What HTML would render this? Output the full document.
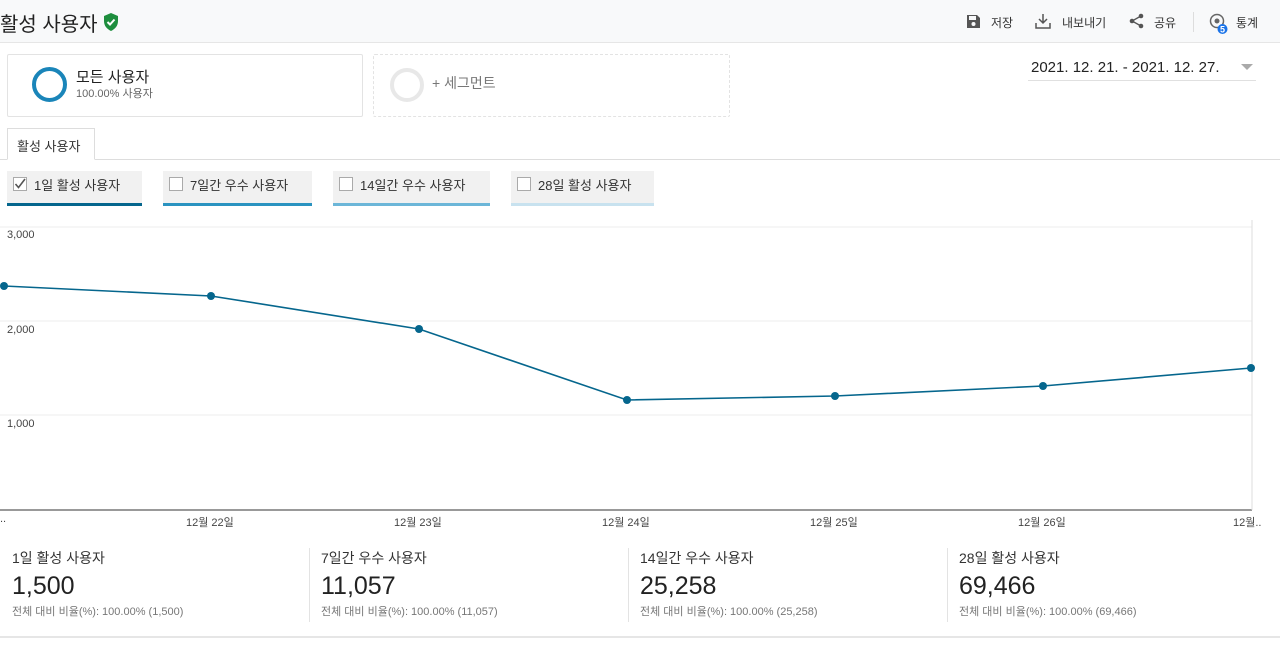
<!DOCTYPE html>
<html><head><meta charset="utf-8"><style>
*{margin:0;padding:0;box-sizing:border-box}
body{width:1280px;height:649px;background:#fff;font-family:"Liberation Sans","Noto Sans CJK KR",sans-serif;color:#222;position:relative;overflow:hidden}
.a{position:absolute}
.hdr{left:0;top:0;width:1280px;height:43px;background:#f8f9fa;border-bottom:1px solid #e6e6e6}
.tb{font-size:12px;color:#333}
.card{border:1px solid #e3e3e3;border-radius:2px;background:#fff}
.chk{height:32px;background:#f1f1f1;font-size:13px;color:#333;padding:4px 0 0 27px}
.chk .bx{position:absolute;left:6px;top:6px;width:14px;height:14px;border:1px solid #aaa;background:#fff}
.ul{position:absolute;left:0;bottom:-3px;height:3px;width:100%}
.lab{font-size:11px;color:#444}
.mt{font-size:14px;color:#333}
.mv{font-size:25px;color:#222}
.ms{font-size:11px;color:#777}
</style></head><body>
<div class="a hdr"></div>
<div class="a" style="left:0;top:8px;font-size:20px;color:#222">활성 사용자</div>
<svg class="a" style="left:103px;top:13px" width="16" height="18" viewBox="0 0 16 18"><path d="M8 0L15 3V8C15 13 12 16 8 18C4 16 1 13 1 8V3Z" fill="#1e8e3e"/><path d="M4.5 9L7 11.5L11.5 6.5" stroke="#fff" stroke-width="2" fill="none"/></svg>
<svg class="a" style="left:966px;top:14px" width="15" height="15" viewBox="0 0 15 15"><path d="M1 1H11L14 4V14H1Z" fill="#555"/><rect x="3" y="2" width="7" height="4" fill="#f8f9fa"/><circle cx="7.5" cy="10" r="2" fill="#f8f9fa"/></svg>
<div class="a tb" style="left:991px;top:14px">저장</div>
<svg class="a" style="left:1035px;top:13px" width="16" height="16" viewBox="0 0 16 16" fill="none" stroke="#555" stroke-width="1.5"><path d="M8 1V10M4 6L8 10L12 6M1 10V15H15V10"/></svg>
<div class="a tb" style="left:1062px;top:14px">내보내기</div>
<svg class="a" style="left:1129px;top:13px" width="15" height="16" viewBox="0 0 15 16"><circle cx="12" cy="3" r="2.3" fill="#555"/><circle cx="3" cy="8" r="2.3" fill="#555"/><circle cx="12" cy="13" r="2.3" fill="#555"/><path d="M12 3L3 8L12 13" stroke="#555" stroke-width="1.3" fill="none"/></svg>
<div class="a tb" style="left:1154px;top:14px">공유</div>
<div class="a" style="left:1193px;top:12px;width:1px;height:20px;background:#ddd"></div>
<svg class="a" style="left:1208px;top:12px" width="24" height="24" viewBox="0 0 24 24"><circle cx="9" cy="9" r="6.5" stroke="#666" stroke-width="1.5" fill="none"/><circle cx="9" cy="9" r="2.5" fill="#666"/><circle cx="14.5" cy="17" r="5" fill="#1a73e8"/><text x="14.5" y="20.5" font-size="9" fill="#fff" text-anchor="middle" font-family="Liberation Sans" font-weight="bold">5</text></svg>
<div class="a tb" style="left:1236px;top:14px">통계</div>

<div class="a card" style="left:7px;top:54px;width:356px;height:63px"></div>
<div class="a" style="left:32px;top:67px;width:35px;height:35px;border:4px solid #1a85b9;border-radius:50%"></div>
<div class="a" style="left:76px;top:66px;font-size:15px;color:#222">모든 사용자</div>
<div class="a" style="left:76px;top:85px;font-size:11px;color:#666">100.00% 사용자</div>
<div class="a card" style="left:373px;top:54px;width:357px;height:63px;border:1px dashed #e3e3e3"></div>
<div class="a" style="left:390px;top:68px;width:34px;height:34px;border:4px solid #e8e8e8;border-radius:50%"></div>
<div class="a" style="left:432px;top:73px;font-size:14px;color:#777">+ 세그먼트</div>
<div class="a" style="left:1031px;top:59px;font-size:15px;color:#222">2021. 12. 21. - 2021. 12. 27.</div>
<div class="a" style="left:1241px;top:64px;width:0;height:0;border-left:6px solid transparent;border-right:6px solid transparent;border-top:6px solid #aaa"></div>
<div class="a" style="left:1028px;top:80px;width:228px;height:1px;background:#e0e0e0"></div>

<div class="a" style="left:0;top:159px;width:1280px;height:1px;background:#ddd"></div>
<div class="a" style="left:7px;top:128px;width:88px;height:32px;border:1px solid #ddd;border-bottom:1px solid #fff;background:#fff;font-size:13px;padding:7px 0 0 9px;color:#333">활성 사용자</div>

<div class="a chk" style="left:7px;top:171px;width:135px"><div class="bx"><svg width="12" height="12" viewBox="0 0 12 12" style="position:absolute;left:0;top:0"><path d="M1.5 6L4.5 9.5L11 1" stroke="#555" stroke-width="1.6" fill="none"/></svg></div>1일 활성 사용자<div class="ul" style="background:#05668d"></div></div>
<div class="a chk" style="left:163px;top:171px;width:149px"><div class="bx"></div>7일간 우수 사용자<div class="ul" style="background:#2a93c0"></div></div>
<div class="a chk" style="left:333px;top:171px;width:157px"><div class="bx"></div>14일간 우수 사용자<div class="ul" style="background:#6cb6d8"></div></div>
<div class="a chk" style="left:511px;top:171px;width:143px"><div class="bx"></div>28일 활성 사용자<div class="ul" style="background:#c8e2ef"></div></div>

<svg class="a" style="left:0;top:220px" width="1280" height="310">
<line x1="0" y1="7" x2="1252" y2="7" stroke="#eee"/>
<line x1="0" y1="101" x2="1252" y2="101" stroke="#eee"/>
<line x1="0" y1="195" x2="1252" y2="195" stroke="#eee"/>
<line x1="0" y1="290" x2="1252" y2="290" stroke="#333"/>
<line x1="1252" y1="0" x2="1252" y2="290" stroke="#ddd"/>
<polyline points="4,66 211,76 419,109 627,180 835,176 1043,166 1251,148" fill="none" stroke="#05668d" stroke-width="1.6"/>
<g fill="#05668d"><circle cx="4" cy="66" r="4"/><circle cx="211" cy="76" r="4"/><circle cx="419" cy="109" r="4"/><circle cx="627" cy="180" r="4"/><circle cx="835" cy="176" r="4"/><circle cx="1043" cy="166" r="4"/><circle cx="1251" cy="148" r="4"/></g>
</svg>
<div class="a lab" style="left:7px;top:229px">3,000</div>
<div class="a lab" style="left:7px;top:324px">2,000</div>
<div class="a lab" style="left:7px;top:418px">1,000</div>
<div class="a lab" style="left:0;top:513px">..</div>
<div class="a lab" style="left:186px;top:514px">12월 22일</div>
<div class="a lab" style="left:394px;top:514px">12월 23일</div>
<div class="a lab" style="left:602px;top:514px">12월 24일</div>
<div class="a lab" style="left:810px;top:514px">12월 25일</div>
<div class="a lab" style="left:1018px;top:514px">12월 26일</div>
<div class="a lab" style="left:1233px;top:514px">12월..</div>

<div class="a" style="left:309px;top:548px;width:1px;height:74px;background:#e3e3e3"></div>
<div class="a" style="left:628px;top:548px;width:1px;height:74px;background:#e3e3e3"></div>
<div class="a" style="left:947px;top:548px;width:1px;height:74px;background:#e3e3e3"></div>
<div class="a mt" style="left:12px;top:548px">1일 활성 사용자</div>
<div class="a mv" style="left:12px;top:572px">1,500</div>
<div class="a ms" style="left:12px;top:603px">전체 대비 비율(%): 100.00% (1,500)</div>
<div class="a mt" style="left:321px;top:548px">7일간 우수 사용자</div>
<div class="a mv" style="left:321px;top:572px">11,057</div>
<div class="a ms" style="left:321px;top:603px">전체 대비 비율(%): 100.00% (11,057)</div>
<div class="a mt" style="left:640px;top:548px">14일간 우수 사용자</div>
<div class="a mv" style="left:640px;top:572px">25,258</div>
<div class="a ms" style="left:640px;top:603px">전체 대비 비율(%): 100.00% (25,258)</div>
<div class="a mt" style="left:959px;top:548px">28일 활성 사용자</div>
<div class="a mv" style="left:959px;top:572px">69,466</div>
<div class="a ms" style="left:959px;top:603px">전체 대비 비율(%): 100.00% (69,466)</div>
<div class="a" style="left:0;top:636px;width:1280px;height:2px;background:#e6e6e6"></div>
</body></html>
